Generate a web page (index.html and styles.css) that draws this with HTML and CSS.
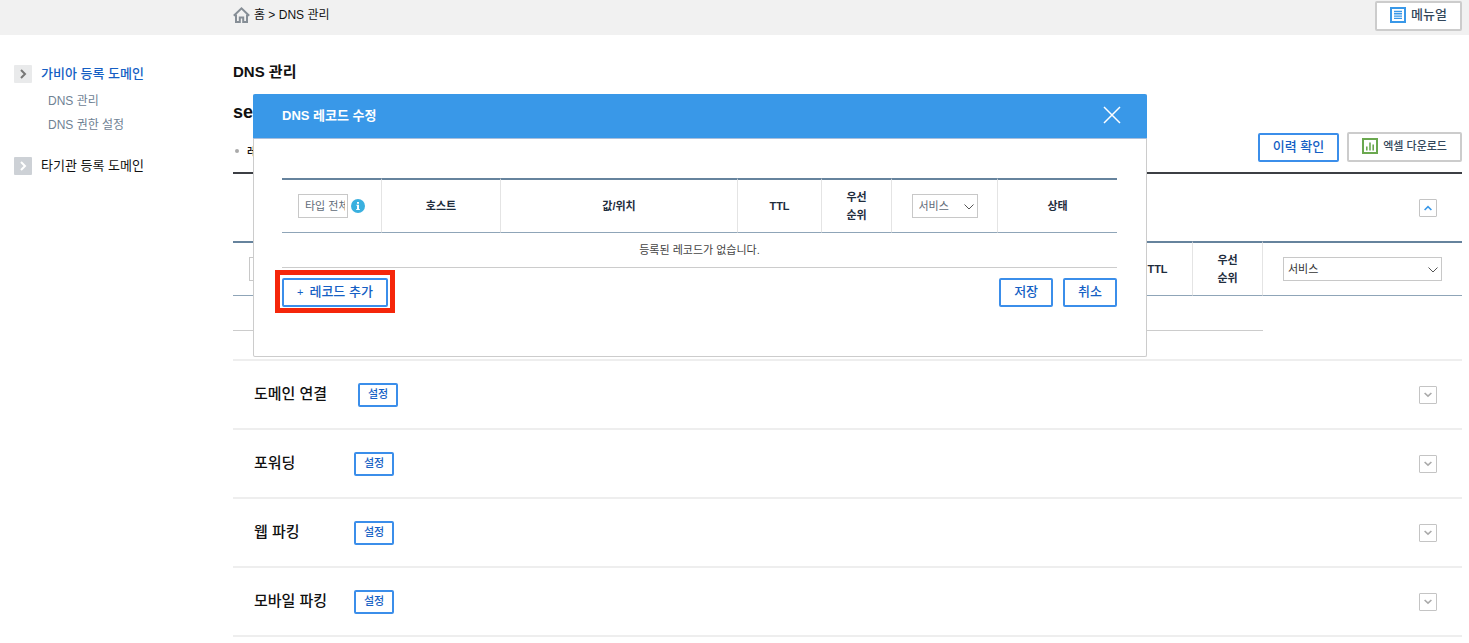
FILE: index.html
```html
<!DOCTYPE html>
<html lang="ko">
<head>
  <meta charset="UTF-8" />
  <meta name="viewport" content="width=device-width, initial-scale=1.0" />
  <title>DNS 관리</title>
  <link rel="stylesheet" href="styles.css">
</head>
<body>
  <!-- 상단 경로 -->
  <header class="topbar">
    <nav class="breadcrumb">
      <svg class="home-icon" width="17" height="16" viewBox="0 0 17 16" fill="none" stroke="#868e96" stroke-width="2">
        <path d="M0.8 8.8L8.5 1.4L16.2 8.8" />
        <path d="M3 7.4V15H6.8V10.4H10.2V15H14V7.4" />
      </svg>
      <span>홈 &gt; DNS 관리</span>
    </nav>
    <button class="btn btn-gray btn-manual" type="button">
      <svg width="16" height="16" viewBox="0 0 16 16" fill="none" stroke="#3998e8">
        <rect x="1" y="1" width="14" height="14" stroke-width="2" />
        <path d="M4 4.5H12M4 6.8H12M4 9.1H12M4 11.4H12" stroke-width="1.4" />
      </svg>
      메뉴얼
    </button>
  </header>

  <div class="layout">
    <!-- 왼쪽 메뉴 -->
    <aside class="sidebar">
      <div class="menu-item active">
        <span class="menu-arrow">
          <svg width="8" height="10" viewBox="0 0 8 10" fill="none" stroke="#777" stroke-width="2"><path d="M2 1L6 5L2 9" /></svg>
        </span>
        <a href="#">가비아 등록 도메인</a>
      </div>
      <ul class="submenu">
        <li><a href="#">DNS 관리</a></li>
        <li><a href="#">DNS 권한 설정</a></li>
      </ul>
      <div class="menu-item">
        <span class="menu-arrow dark">
          <svg width="8" height="10" viewBox="0 0 8 10" fill="none" stroke="#fff" stroke-width="2"><path d="M2 1L6 5L2 9" /></svg>
        </span>
        <a href="#">타기관 등록 도메인</a>
      </div>
    </aside>

    <main class="content">
      <h1 class="page-title">DNS 관리</h1>
      <h2 class="domain-name">se</h2>

      <div class="toolbar">
        <p class="notice">레</p>
        <div class="toolbar-buttons">
          <button class="btn btn-blue btn-history" type="button">이력 확인</button>
          <button class="btn btn-gray btn-excel" type="button">
            <svg width="16" height="16" viewBox="0 0 16 16" fill="none" stroke="#6aa84f">
              <rect x="1" y="1" width="14" height="14" stroke-width="2" />
              <path d="M4.8 12.5V8.5M8 12.5V4.5M11.2 12.5V6.5" stroke-width="1.6" />
            </svg>
            엑셀 다운로드
          </button>
        </div>
      </div>

      <!-- DNS 설정 -->
      <section class="panel">
        <div class="panel-head">
          <button class="toggle" type="button" aria-label="접기">
            <svg width="8" height="6" viewBox="0 0 8 6" fill="none" stroke="#3998e8" stroke-width="1.6"><path d="M0.6 5L4 1.6L7.4 5" /></svg>
          </button>
        </div>
        <table class="records">
          <colgroup>
            <col class="col-type">
            <col>
            <col class="col-ttl-narrow">
            <col class="col-priority">
            <col class="col-service-wide">
          </colgroup>
          <thead>
            <tr>
              <th>
                <div class="type-cell">
                  <select class="select type-select" aria-label="타입"><option>타입 전체</option></select>
                  <svg width="14" height="14" viewBox="0 0 14 14">
                    <circle cx="7" cy="7" r="7" fill="#3ab0df" />
                    <path d="M6 3H8V4.8H6ZM5.4 5.8H8V10H8.8V11H5.2V10H6V6.8H5.4Z" fill="#fff" />
                  </svg>
                </div>
              </th>
              <th></th>
              <th>TTL</th>
              <th>우선<br />순위</th>
              <th>
                <span class="select-box wide">
                  <select class="select" aria-label="서비스"><option>서비스</option></select>
                  <svg width="10" height="6" viewBox="0 0 10 6" fill="none" stroke="#555"><path d="M0.5 0.5L5 5L9.5 0.5" /></svg>
                </span>
              </th>
            </tr>
          </thead>
          <tbody>
            <tr>
              <td colspan="4"></td>
            </tr>
          </tbody>
        </table>
      </section>

      <section class="service-row">
        <h3 class="long">도메인 연결</h3>
        <button class="btn btn-blue btn-set" type="button">설정</button>
        <button class="toggle" type="button" aria-label="펼치기">
          <svg width="8" height="6" viewBox="0 0 8 6" fill="none" stroke="#aaa" stroke-width="1.6"><path d="M0.6 1L4 4.2L7.4 1" /></svg>
        </button>
      </section>
      <section class="service-row">
        <h3>포워딩</h3>
        <button class="btn btn-blue btn-set" type="button">설정</button>
        <button class="toggle" type="button" aria-label="펼치기">
          <svg width="8" height="6" viewBox="0 0 8 6" fill="none" stroke="#aaa" stroke-width="1.6"><path d="M0.6 1L4 4.2L7.4 1" /></svg>
        </button>
      </section>
      <section class="service-row">
        <h3>웹 파킹</h3>
        <button class="btn btn-blue btn-set" type="button">설정</button>
        <button class="toggle" type="button" aria-label="펼치기">
          <svg width="8" height="6" viewBox="0 0 8 6" fill="none" stroke="#aaa" stroke-width="1.6"><path d="M0.6 1L4 4.2L7.4 1" /></svg>
        </button>
      </section>
      <section class="service-row">
        <h3>모바일 파킹</h3>
        <button class="btn btn-blue btn-set" type="button">설정</button>
        <button class="toggle" type="button" aria-label="펼치기">
          <svg width="8" height="6" viewBox="0 0 8 6" fill="none" stroke="#aaa" stroke-width="1.6"><path d="M0.6 1L4 4.2L7.4 1" /></svg>
        </button>
      </section>
    </main>
  </div>

  <!-- 레코드 수정 팝업 -->
  <div class="modal" role="dialog" aria-labelledby="modalTitle">
    <div class="modal-head">
      <h2 id="modalTitle">DNS 레코드 수정</h2>
      <button class="modal-close" type="button" aria-label="닫기">
        <svg width="18" height="18" viewBox="0 0 18 18" fill="none" stroke="#fff" stroke-width="1.5"><path d="M1 1L17 17M17 1L1 17" /></svg>
      </button>
    </div>
    <div class="modal-body">
      <table class="records">
        <colgroup>
          <col class="col-type">
          <col class="col-host">
          <col>
          <col class="col-ttl">
          <col class="col-priority">
          <col class="col-service">
          <col class="col-host">
        </colgroup>
        <thead>
          <tr>
            <th>
              <div class="type-cell">
                <select class="select type-select" aria-label="타입"><option>타입 전체</option></select>
                <svg width="14" height="14" viewBox="0 0 14 14">
                  <circle cx="7" cy="7" r="7" fill="#3ab0df" />
                  <path d="M6 3H8V4.8H6ZM5.4 5.8H8V10H8.8V11H5.2V10H6V6.8H5.4Z" fill="#fff" />
                </svg>
              </div>
            </th>
            <th>호스트</th>
            <th>값/위치</th>
            <th>TTL</th>
            <th>우선<br />순위</th>
            <th>
              <span class="select-box">
                <select class="select" aria-label="서비스"><option>서비스</option></select>
                <svg width="10" height="6" viewBox="0 0 10 6" fill="none" stroke="#555"><path d="M0.5 0.5L5 5L9.5 0.5" /></svg>
              </span>
            </th>
            <th>상태</th>
          </tr>
        </thead>
        <tbody>
          <tr>
            <td colspan="7">등록된 레코드가 없습니다.</td>
          </tr>
        </tbody>
      </table>
      <div class="modal-actions">
        <button class="btn btn-blue btn-add" type="button"><span class="plus">+</span>레코드 추가</button>
        <div class="modal-confirm">
          <button class="btn btn-blue" type="button">저장</button>
          <button class="btn btn-blue" type="button">취소</button>
        </div>
      </div>
    </div>
  </div>
</body>
</html>
```

FILE: styles.css
```css
* {
  box-sizing: border-box;
}

body {
  margin: 0;
  font-family: "Liberation Sans", "Noto Sans CJK KR", sans-serif;
  font-size: 12px;
  color: #111;
  background: #fff;
}

h1, h2, h3, p, ul {
  margin: 0;
  padding: 0;
}

a {
  color: inherit;
  text-decoration: none;
}

svg {
  display: block;
  flex-shrink: 0;
}

/* 버튼 */
.btn {
  display: flex;
  align-items: center;
  justify-content: center;
  height: 29px;
  padding: 0 13px 2px;
  border: 2px solid #ccc;
  border-radius: 2px;
  background: #fff;
  font-family: inherit;
  font-size: 13px;
  font-weight: 500;
  line-height: 18px;
  white-space: nowrap;
  cursor: pointer;
}

.btn-blue {
  border-color: #3b8eea;
  color: #155fc4;
}

.btn-gray {
  gap: 5px;
  height: 30px;
  color: #33475b;
}

.btn-excel {
  font-size: 11px;
}

.btn-set {
  height: 24px;
  padding: 0 8px 2px;
  font-size: 11px;
}

.toggle {
  display: flex;
  align-items: center;
  justify-content: center;
  width: 18px;
  height: 18px;
  padding: 0;
  border: 1px solid #c4c4c4;
  border-radius: 1px;
  background: #fff;
  cursor: pointer;
}

/* 상단 */
.topbar {
  display: flex;
  justify-content: space-between;
  height: 35px;
  padding: 1px 7px 0 233px;
  background: #f1f1f1;
}

.breadcrumb {
  display: flex;
  align-items: center;
  gap: 4px;
  height: 28px;
}

.breadcrumb span {
  padding-bottom: 3px;
}

.layout {
  display: flex;
}

/* 왼쪽 메뉴 */
.sidebar {
  flex: 0 0 233px;
  padding: 29px 0 0 14px;
}

.menu-item {
  display: flex;
  align-items: center;
  gap: 9px;
  font-size: 13px;
  line-height: 20px;
}

.active {
  color: #155fc4;
  font-weight: 500;
}

.menu-arrow {
  display: flex;
  align-items: center;
  justify-content: center;
  width: 18px;
  height: 18px;
  border-radius: 1px;
  background: #e9eaeb;
}

.dark {
  background: #cdd1d6;
}

.submenu {
  margin: 5px 0 19px 34px;
  list-style: none;
  color: #6f8294;
  line-height: 24px;
}

/* 본문 */
.content {
  flex: 1;
  min-width: 0;
  padding: 25px 7px 0 0;
}

.page-title {
  font-size: 15px;
  line-height: 24px;
}

.domain-name {
  margin-top: 16px;
  font-size: 18px;
  line-height: 24px;
}

.toolbar {
  display: flex;
  align-items: center;
  justify-content: space-between;
  margin-top: 8px;
  padding-bottom: 10px;
  border-bottom: 2px solid #3c3f44;
}

.notice {
  display: flex;
  align-items: center;
  gap: 8px;
  padding: 8px 0 0 2px;
  font-size: 11px;
  font-weight: 500;
}

.notice::before {
  content: "";
  width: 4px;
  height: 4px;
  border-radius: 50%;
  background: #aaa;
}

.toolbar-buttons {
  display: flex;
  align-items: flex-end;
  gap: 8px;
}

.panel {
  padding-bottom: 28px;
}

.panel-head {
  display: flex;
  align-items: center;
  justify-content: flex-end;
  height: 67px;
  padding-right: 25px;
}

/* 레코드 표 */
.records {
  width: 100%;
  table-layout: fixed;
  border-collapse: separate;
  border-spacing: 0;
  font-size: 11px;
  line-height: 18px;
}

.records th {
  height: 55px;
  padding: 0;
  border-top: 2px solid #66839d;
  border-bottom: 1px solid #8fa5b8;
  border-right: 1px solid #e4e4e4;
  color: #1f2d3d;
  font-weight: bold;
}

.records th:last-child {
  border-right: none;
}

.records td {
  height: 35px;
  padding: 0;
  border-bottom: 1px solid #ccc;
  color: #444;
  text-align: center;
}

.col-type { width: 100px; }
.col-host { width: 119px; }
.col-ttl { width: 84px; }
.col-ttl-narrow { width: 70px; }
.col-priority { width: 70px; }
.col-service { width: 106px; }
.col-service-wide { width: 199px; }

.type-cell {
  display: flex;
  align-items: center;
  justify-content: center;
  gap: 3px;
}

.select {
  width: 100%;
  height: 24px;
  padding: 0 2px 0 6px;
  border: 1px solid #c8c8c8;
  border-radius: 0;
  background: #fff;
  color: #5f6b78;
  font-family: inherit;
  font-size: 11px;
  appearance: none;
}

.type-select {
  width: 50px;
}

.select-box {
  display: block;
  position: relative;
  width: 66px;
  margin: 0 auto;
}

.wide {
  width: 159px;
}

.wide .select {
  padding-left: 4px;
  color: #333;
}

.select-box svg {
  position: absolute;
  top: 10px;
  right: 4px;
  pointer-events: none;
}

/* 부가 서비스 */
.service-row {
  display: flex;
  align-items: center;
  height: 69px;
  padding: 0 25px 0 21px;
  border-top: 2px solid #eee;
}

.service-row:last-child {
  height: 71px;
  border-bottom: 2px solid #eee;
}

.service-row h3 {
  width: 100px;
  padding-bottom: 5px;
  font-size: 15px;
  font-weight: 500;
}

.service-row .long {
  width: 104px;
}

.service-row .toggle {
  margin-left: auto;
}

/* 팝업 */
.modal {
  position: absolute;
  top: 94px;
  left: 253px;
  right: 322px;
  background: #fff;
  border: 1px solid #ccc;
  border-top: none;
  border-radius: 2px;
}

.modal-head {
  display: flex;
  align-items: center;
  justify-content: space-between;
  height: 45px;
  margin: 0 -1px;
  padding: 0 26px 3px 29px;
  border-bottom: 1px solid #a9bedb;
  border-radius: 2px 2px 0 0;
  background: #3998e8;
  color: #fff;
}

.modal-head h2 {
  font-size: 13px;
}

.modal-close {
  padding: 0;
  border: none;
  background: none;
  cursor: pointer;
}

.modal-body {
  padding: 39px 29px 49px 28px;
}

.modal-actions {
  display: flex;
  justify-content: space-between;
  margin-top: 10px;
}

.modal-confirm {
  display: flex;
  gap: 10px;
}

.btn-add {
  position: relative;
  gap: 6px;
}

.plus {
  font-size: 11px;
}

/* 강조 테두리 */
.btn-add::after {
  content: "";
  position: absolute;
  inset: -10px -9px -8px;
  border: 5px solid #f5260a;
}
```
